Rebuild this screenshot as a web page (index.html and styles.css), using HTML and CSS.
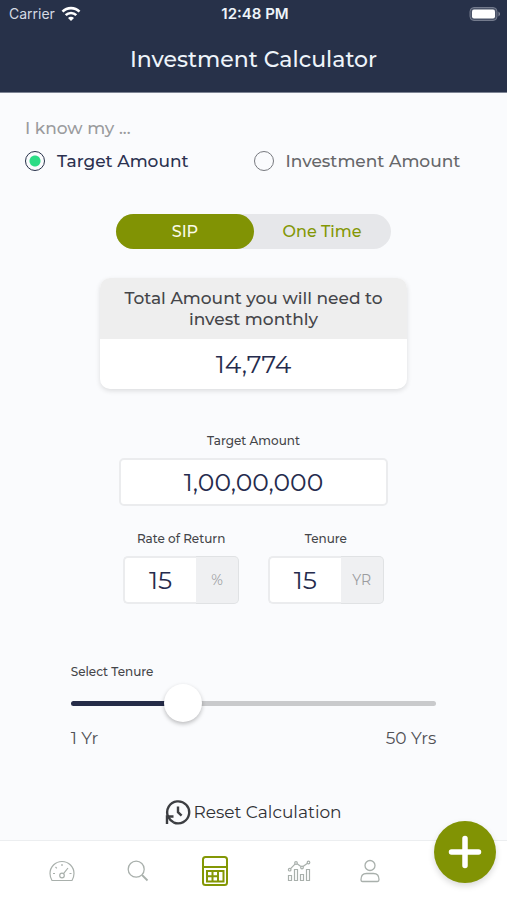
FILE: index.html
```html
<!DOCTYPE html>
<html lang="en">
<head>
<meta charset="utf-8">
<meta name="viewport" content="width=device-width, initial-scale=1">
<title>Investment Calculator</title>
<link rel="stylesheet" href="styles.css">
</head>
<body>
<header class="header">
  <div class="status">
    <span class="carrier">Carrier
      <svg width="20" height="16" viewBox="0 0 20 16" fill="none" stroke="#fff" stroke-width="2.600" aria-hidden="true"><path d="M1.500 5.700a12 12 0 0 1 17 0M4.700 9.200a7.500 7.500 0 0 1 10.600 0"/><path d="M7 12a4.200 4.200 0 0 1 6 0l-3 3z" fill="#fff" stroke="none"/></svg>
    </span>
    <span class="clock">12:48 PM</span>
    <svg class="battery" width="32" height="16" viewBox="0 0 32 16" aria-hidden="true"><rect x="1" y="1.500" width="27" height="13" rx="4" fill="#4b5469" stroke="#747b8d"/><rect x="3" y="3.500" width="23" height="9" rx="2" fill="#fff"/><path d="M29.500 5.500q3 2.500 0 5z" fill="#8b91a0"/></svg>
  </div>
  <h1 class="title">Investment Calculator</h1>
</header>

<main class="main">
  <fieldset class="known">
    <legend class="legend">I know my ...</legend>
    <div class="choices">
      <label class="choice choice-on"><input class="radio" type="radio" name="known" checked>Target Amount</label>
      <label class="choice"><input class="radio" type="radio" name="known">Investment Amount</label>
    </div>
  </fieldset>

  <div class="toggle">
    <button class="mode mode-on" type="button" aria-pressed="true">SIP</button>
    <button class="mode" type="button" aria-pressed="false">One Time</button>
  </div>

  <section class="card">
    <h2 class="card-head">Total Amount you will need to invest monthly</h2>
    <output class="card-value">14,774</output>
  </section>

  <div class="field field-target">
    <label class="label" for="target">Target Amount</label>
    <input class="box" id="target" type="text" inputmode="numeric" value="1,00,00,000">
  </div>

  <div class="pair">
    <div class="field">
      <label class="label" for="rate">Rate of Return</label>
      <div class="group"><input class="box" id="rate" type="text" value="15"><span class="unit">%</span></div>
    </div>
    <div class="field">
      <label class="label" for="tenure">Tenure</label>
      <div class="group"><input class="box" id="tenure" type="text" value="15"><span class="unit">YR</span></div>
    </div>
  </div>

  <div class="slider">
    <label class="label" for="range">Select Tenure</label>
    <input class="range" id="range" type="range" min="1" max="50" value="15">
    <div class="ends"><span>1 Yr</span><span>50 Yrs</span></div>
  </div>

  <button class="reset" type="button">
    <svg width="26" height="26" viewBox="0 0 26 26" fill="none" stroke="#3c3e42" stroke-width="2.400" aria-hidden="true"><path d="M8.500 23.300A11 11 0 1 0 3 17.500Q5 21.500 8.500 23.300"/><path d="M2 25V17.500H8.500M13 7.500V13.200l3.600 3.400"/></svg>Reset Calculation
  </button>
</main>

<nav class="nav">
  <a class="tab" href="#" aria-label="Dashboard"><svg width="26" height="22" viewBox="0 0 26 22" fill="none" stroke="#a9b0ac" stroke-width="1.200"><path d="M3 20.500Q1 17 1 13.500a12 12 0 0 1 24 0q0 3.500-2 7z" stroke-linejoin="round"/><circle cx="13" cy="15.500" r="2.300"/><path d="M14.500 13.700L19 8M13 4v2M6.500 7l1.300 1.300M4 13.500h2M20.500 13.500h2"/></svg></a>
  <a class="tab" href="#" aria-label="Search"><svg width="22" height="22" viewBox="0 0 22 22" fill="none" stroke="#a9b0ac" stroke-width="1.300"><circle cx="9.200" cy="9.200" r="8"/><path d="M15 15l5.500 5.500" stroke-width="1.800"/></svg></a>
  <a class="tab" href="#" aria-label="Calculator" aria-current="page"><svg width="28" height="32" viewBox="0 0 28 32" fill="none" stroke="#839705" stroke-width="2"><rect x="2" y="2" width="24" height="28" rx="2.500"/><path d="M2 12h24M6 16h16.500v10.500H6zM11.500 16v10.500M17 16v10.500M6 21.300h11"/></svg></a>
  <a class="tab" href="#" aria-label="Reports"><svg width="24" height="22" viewBox="0 0 24 22" fill="none" stroke="#a9b0ac" stroke-width="1.200"><path d="M1.500 15.500h3v5h-3zM7.500 9.500h3v11h-3zM13.500 14.500h3v6h-3zM19.500 9.500h3v11h-3z"/><circle cx="2.700" cy="9.700" r="1.300"/><circle cx="9" cy="3" r="1.300"/><circle cx="15" cy="7.500" r="1.300"/><circle cx="21.500" cy="2.500" r="1.300"/><path d="M3.600 8.700L8 4.100M10.100 3.800l3.800 2.800M16 6.600l4.500-3.300"/></svg></a>
  <a class="tab" href="#" aria-label="Profile"><svg width="20" height="24" viewBox="0 0 20 24" fill="none" stroke="#a9b0ac" stroke-width="1.300"><circle cx="10" cy="6.500" r="5"/><path d="M2.500 22.500q-1.500 0-1.500-2 0-6 5.500-6h7q5.500 0 5.500 6 0 2-1.500 2z"/></svg></a>
  <button class="add" type="button" aria-label="Add"><svg width="34" height="34" viewBox="0 0 34 34" stroke="#fff" stroke-width="5.500" stroke-linecap="round" aria-hidden="true"><path d="M17 3.500v27M3.500 17h27"/></svg></button>
</nav>
</body>
</html>
```

FILE: styles.css
```css
* { box-sizing: border-box; }

body {
  margin: 0;
  min-height: 100vh;
  display: flex;
  flex-direction: column;
  background: #fafbfd;
  color: #444549;
  font-family: Montserrat, Inter, sans-serif;
  font-size: 17px;
  font-weight: 500;
  line-height: 20px;
}

button, input { font: inherit; color: inherit; }
button { border: 0; padding: 0; cursor: pointer; }
svg { display: block; flex: none; }

.header {
  height: 93px;
  background: #273149;
  border-bottom: 1px solid #7d8494;
  color: #eef4fa;
}
.status {
  display: grid;
  grid-template-columns: 1fr auto 1fr;
  align-items: center;
  height: 27px;
  padding: 0 6px 0 9px;
  font-family: Inter, sans-serif;
  font-size: 14px;
}
.carrier { display: flex; align-items: center; gap: 6px; color: #d5dae3; font-weight: 400; }
.clock { font-size: 15px; font-weight: 600; }
.battery { justify-self: end; }
.title {
  margin: 17px 0 0;
  font-size: 22px;
  line-height: 32px;
  font-weight: 500;
  text-align: center;
}

.main {
  flex: 1;
  display: flex;
  flex-direction: column;
  align-items: center;
  padding: 25px 25px 15px;
}

.known { align-self: stretch; margin: 0; padding: 0; border: 0; }
.legend { padding: 0; color: #9a9b9e; }
.choices { display: grid; grid-template-columns: 1fr 1fr; margin-top: 13px; }
.choice { display: flex; align-items: center; gap: 12px; color: #66676a; white-space: nowrap; }
.choice-on { color: #2b3150; }
.radio {
  appearance: none;
  flex: none;
  width: 20px;
  height: 20px;
  margin: 0;
  border: 1px solid #77797f;
  border-radius: 50%;
}
.radio:checked {
  border-color: #273149;
  background: radial-gradient(circle, #2bdc85 5px, transparent 6px);
}

.toggle {
  display: flex;
  width: 60%;
  height: 35px;
  margin-top: 43px;
  border-radius: 18px;
  background: #e6e7ea;
}
.mode { flex: 1; border-radius: 18px; background: none; color: #839705; font-size: 16px; }
.mode-on { background: #819304; color: #fafbe8; }

.card {
  width: 67%;
  margin-top: 29px;
  border-radius: 10px;
  background: #fff;
  box-shadow: 0 2px 5px #0000001f;
  overflow: hidden;
  text-align: center;
}
.card-head {
  margin: 0;
  padding: 10px 20px 9px;
  background: #eeeeee;
  font-size: 17px;
  line-height: 21px;
  font-weight: 500;
}
.card-value { display: block; color: #252b4d; font-size: 25px; font-weight: 400; line-height: 50px; }

.field { display: flex; flex-direction: column; align-items: center; gap: 7px; }
.field-target { width: 59%; margin-top: 42px; }
.label { font-size: 12px; line-height: 20px; }
.box {
  width: 100%;
  height: 48px;
  padding: 0;
  border: 2px solid #ebecee;
  border-radius: 5px;
  background: #fff;
  color: #252b4d;
  font-size: 25px;
  font-weight: 400;
  text-align: center;
}
.pair { display: grid; grid-template-columns: 1fr 1fr; gap: 29px; width: 57%; margin-top: 23px; }
.group { display: flex; width: 100%; }
.group .box { flex: 1; min-width: 0; border-right: 0; border-radius: 5px 0 0 5px; }
.unit {
  display: flex;
  align-items: center;
  justify-content: center;
  width: 43px;
  border: 1px solid #e0e2e4;
  border-left: 0;
  border-radius: 0 5px 5px 0;
  background: #eff0f2;
  color: #9b9c9f;
  font-size: 14px;
  font-weight: 400;
}

.slider { display: flex; flex-direction: column; width: 80%; margin-top: 58px; }
.range {
  appearance: none;
  width: 100%;
  height: 38px;
  margin: 2px 0 6px;
  background: none;
}
.range::-webkit-slider-runnable-track {
  height: 5px;
  border-radius: 3px;
  background: linear-gradient(90deg, #252c48 31%, #c9cacc 31%);
}
.range::-webkit-slider-thumb {
  appearance: none;
  width: 38px;
  height: 38px;
  margin-top: -17px;
  border-radius: 50%;
  background: #fff;
  box-shadow: 0 2px 4px #00000040;
}
.ends { display: flex; justify-content: space-between; color: #505155; font-weight: 400; }

.reset { display: flex; align-items: center; gap: 2px; margin-top: 51px; background: none; color: #303135; font-weight: 400; }

.nav {
  position: relative;
  display: grid;
  grid-template-columns: 76fr 76fr 78fr 90fr 52fr;
  height: 60px;
  padding: 0 111px 0 24px;
  border-top: 1px solid #eceef0;
  background: #fff;
}
.tab { display: flex; align-items: center; justify-content: center; }
.add {
  position: absolute;
  right: 11px;
  top: -20px;
  display: flex;
  align-items: center;
  justify-content: center;
  width: 62px;
  height: 62px;
  border-radius: 50%;
  background: #819304;
  box-shadow: 0 3px 6px #00000026;
}
```
